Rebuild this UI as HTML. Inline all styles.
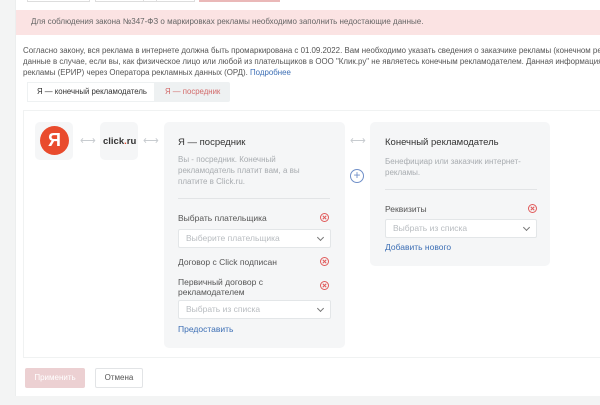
<!DOCTYPE html>
<html><head><meta charset="utf-8"><style>
*{margin:0;padding:0;box-sizing:border-box}
body{width:600px;height:405px;overflow:hidden;background:#fff;font-family:"Liberation Sans","Noto Sans CJK SC",sans-serif;position:relative;color:#333}
.a{position:absolute}
.t{position:absolute;white-space:nowrap}
.sel{position:absolute;border:1px solid #e3e6e8;background:#fff;border-radius:2px;font-size:8.5px;color:#b8bcc0;padding-left:7px;line-height:17px}
.sel:after{content:"";position:absolute;right:7px;top:5px;width:4px;height:4px;border-right:1px solid #777;border-bottom:1px solid #777;transform:rotate(45deg)}
.x{position:absolute;width:9px;height:9px;border:1px solid #e05a5a;border-radius:50%}
.x:before,.x:after{content:"";position:absolute;left:1px;top:3px;width:5px;height:1px;background:#e05a5a;transform:rotate(45deg)}
.x:after{transform:rotate(-45deg)}
.lnk{color:#3d6fb5}
.card{position:absolute;background:#f5f6f7;border-radius:5px}
.arr{position:absolute;font-size:11px;color:#c8ccd0}
</style></head><body>
<div class="a" style="left:0;top:0;width:15px;height:405px;background:#f3f4f4"></div>
<div class="a" style="left:15px;top:0;width:1px;height:397px;background:#eceeee"></div>
<div class="a" style="left:15px;top:396px;width:585px;height:9px;background:#f3f4f4"></div>
<div class="a" style="left:27px;top:0;width:63px;height:2px;border:1px solid #ddd;border-top:none"></div>
<div class="a" style="left:95px;top:0;width:62px;height:2px;border:1px solid #ddd;border-top:none"></div>
<div class="a" style="left:143px;top:0;width:52px;height:2px;border:1px solid #ddd;border-top:none"></div>
<div class="a" style="left:199px;top:0;width:81px;height:2px;background:#eab8b8"></div>
<div class="a" style="left:16px;top:10px;width:584px;height:25px;background:#fbe3e3"></div>
<div class="t" style="left:31px;top:17px;font-size:8px;color:#666">Для соблюдения закона №347-ФЗ о маркировках рекламы необходимо заполнить недостающие данные.</div>
<div class="a" style="left:23px;top:45px;font-size:7.9px;line-height:11px;color:#555;white-space:nowrap">Согласно закону, вся реклама в интернете должна быть промаркирована с 01.09.2022. Вам необходимо указать сведения о заказчике рекламы (конечном ре<br>данные в случае, если вы, как физическое лицо или любой из плательщиков в ООО "Клик.ру" не являетесь конечным рекламодателем. Данная информация<br>рекламы (ЕРИР) через Оператора рекламных данных (ОРД). <span class="lnk">Подробнее</span></div>
<div class="a" style="left:27px;top:82px;width:203px;height:20px;background:#eef1f2;border-radius:2px"></div>
<div class="a" style="left:27px;top:82px;width:128px;height:20px;background:#fff;border:1px solid #eef1f2"></div>
<div class="t" style="left:37px;top:87px;font-size:7.8px;color:#333">Я — конечный рекламодатель</div>
<div class="t" style="left:165px;top:87px;font-size:7.8px;color:#d26a6a">Я — посредник</div>
<div class="a" style="left:23px;top:110px;width:580px;height:248px;border:1px solid #f0f2f2"></div>
<div class="card" style="left:35px;top:122px;width:38px;height:38px;border-radius:5px"></div>
<div class="a" style="left:40px;top:126px;width:29px;height:29px;border-radius:50%;background:#e94b2d;color:#fff;font-size:18px;font-weight:bold;text-align:center;line-height:29px">Я</div>
<div class="arr" style="left:80px;top:134px">⟷</div>
<div class="card" style="left:100px;top:122px;width:38px;height:38px"></div>
<div class="t" style="left:103px;top:136px;font-size:9.5px;font-weight:bold;color:#333">click<span style="color:#e94b2d">.</span>ru</div>
<div class="arr" style="left:143px;top:134px">⟷</div>
<div class="card" style="left:164px;top:122px;width:181px;height:226px"></div>
<div class="t" style="left:178px;top:137px;font-size:9.5px;color:#333">Я — посредник</div>
<div class="a" style="left:178px;top:154px;font-size:8px;line-height:11px;color:#a8acb0">Вы - посредник. Конечный<br>рекламодатель платит вам, а вы<br>платите в Click.ru.</div>
<div class="a" style="left:178px;top:198px;width:152px;height:1px;background:#e2e4e6"></div>
<div class="t" style="left:178px;top:213px;font-size:8.5px;color:#555">Выбрать плательщика</div>
<div class="x" style="left:320px;top:213px"></div>
<div class="sel" style="left:178px;top:229px;width:153px;height:19px">Выберите плательщика</div>
<div class="t" style="left:178px;top:257px;font-size:8.5px;color:#555">Договор с Click подписан</div>
<div class="x" style="left:320px;top:257px"></div>
<div class="a" style="left:178px;top:277px;font-size:8.5px;line-height:10px;color:#555">Первичный договор с<br>рекламодателем</div>
<div class="x" style="left:320px;top:281px"></div>
<div class="sel" style="left:178px;top:300px;width:153px;height:19px">Выбрать из списка</div>
<div class="t lnk" style="left:178px;top:324px;font-size:8.5px">Предоставить</div>
<div class="arr" style="left:350px;top:134px">⟷</div>
<div class="a" style="left:350px;top:169px;width:14px;height:14px;border:1px solid #6f8fc8;border-radius:50%;color:#6f8fc8;font-size:12px;line-height:11px;text-align:center">+</div>
<div class="card" style="left:370px;top:122px;width:180px;height:144px"></div>
<div class="t" style="left:385px;top:137px;font-size:9.5px;color:#333">Конечный рекламодатель</div>
<div class="a" style="left:385px;top:156px;font-size:8px;line-height:11px;color:#a8acb0">Бенефициар или заказчик интернет-<br>рекламы.</div>
<div class="a" style="left:385px;top:189px;width:152px;height:1px;background:#e2e4e6"></div>
<div class="t" style="left:385px;top:204px;font-size:8.5px;color:#555">Реквизиты</div>
<div class="x" style="left:528px;top:204px"></div>
<div class="sel" style="left:385px;top:219px;width:152px;height:19px">Выбрать из списка</div>
<div class="t lnk" style="left:385px;top:242px;font-size:8.5px">Добавить нового</div>
<div class="a" style="left:25px;top:368px;width:60px;height:20px;background:#ecd0d2;border-radius:2px;color:#fff;font-size:8px;text-align:center;line-height:20px">Применить</div>
<div class="a" style="left:95px;top:368px;width:48px;height:20px;border:1px solid #e2e4e6;border-radius:2px;color:#555;font-size:8px;text-align:center;line-height:18px">Отмена</div>
</body></html>
